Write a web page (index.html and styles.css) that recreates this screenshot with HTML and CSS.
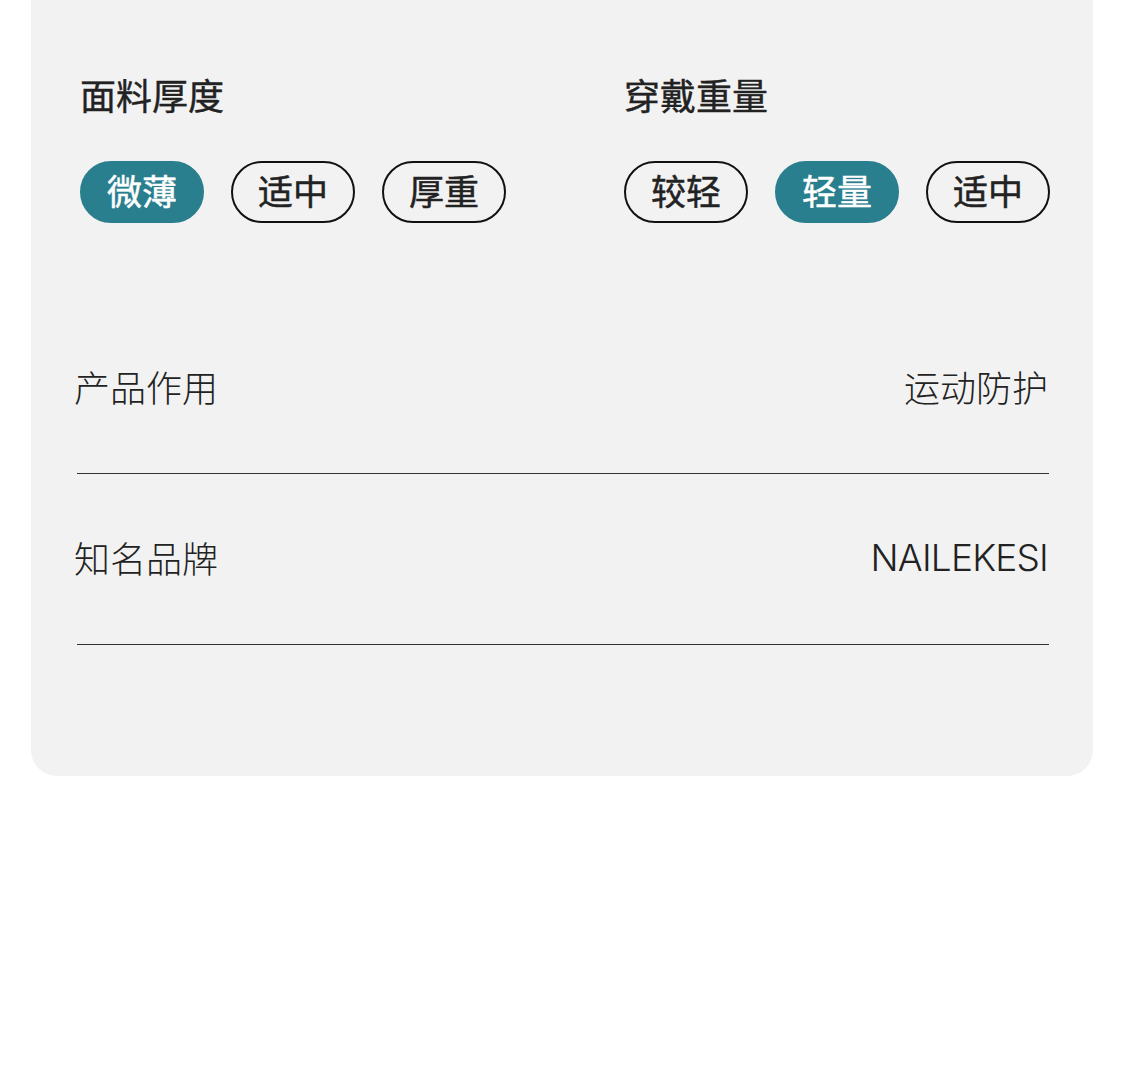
FILE: index.html
```html
<!DOCTYPE html>
<html lang="zh-CN">
<head>
<meta charset="utf-8">
<link rel="stylesheet" href="styles.css">
</head>
<body>
<div class="card">
  <div class="attrs">
    <div class="attr">
      <div class="attr-title">面料厚度</div>
      <div class="pills">
        <span class="pill active">微薄</span>
        <span class="pill">适中</span>
        <span class="pill">厚重</span>
      </div>
    </div>
    <div class="attr">
      <div class="attr-title">穿戴重量</div>
      <div class="pills">
        <span class="pill">较轻</span>
        <span class="pill active">轻量</span>
        <span class="pill">适中</span>
      </div>
    </div>
  </div>
  <div class="rows">
    <div class="row">
      <span class="label">产品作用</span>
      <span class="value">运动防护</span>
    </div>
    <div class="row">
      <span class="label">知名品牌</span>
      <span class="value latin">NAILEKESI</span>
    </div>
  </div>
</div>
</body>
</html>
```
FILE: styles.css
```css
html, body {
  margin: 0;
  padding: 0;
  background: #ffffff;
}
body {
  font-family: "Noto Sans CJK SC", "Noto Sans", sans-serif;
  color: #222222;
}
.card {
  margin: 0 32px 0 31px;
  height: 776px;
  box-sizing: border-box;
  background: #f2f2f2;
  border-radius: 0 0 26px 26px;
  padding-top: 70px;
}
.attrs {
  display: flex;
  padding-left: 49px;
}
.attr {
  width: 544px;
  flex-shrink: 0;
}
.attr-title {
  font-size: 36px;
  line-height: 48px;
  font-weight: 400;
  color: #222;
  -webkit-text-stroke: 0.4px #222;
}
.pills {
  display: flex;
  gap: 27px;
  margin-top: 43px;
}
.pill {
  box-sizing: border-box;
  width: 124px;
  height: 62px;
  padding-bottom: 5px;
  border: 2px solid #111;
  border-radius: 31px;
  display: flex;
  align-items: center;
  justify-content: center;
  font-size: 35px;
  font-weight: 400;
  color: #222;
  -webkit-text-stroke: 0.5px #222;
}
.pill.active {
  background: #2a7f8e;
  border-color: #2a7f8e;
  color: #ffffff;
  -webkit-text-stroke: 0.5px #ffffff;
}
.rows {
  margin-top: 80px;
  padding: 0 44px 0 46px;
}
.row {
  height: 171px;
  box-sizing: border-box;
  border-bottom: 1px solid #333;
  display: flex;
  align-items: center;
  justify-content: space-between;
  padding-bottom: 4px;
  font-size: 36px;
  font-weight: 300;
  color: #222;
}
.label {
  margin-left: -3px;
}
.value {
  margin-right: 1px;
}
.latin {
  font-family: Inter, "Noto Sans", sans-serif;
  font-weight: 300;
  font-size: 37px;
  letter-spacing: -0.8px;
}
```
